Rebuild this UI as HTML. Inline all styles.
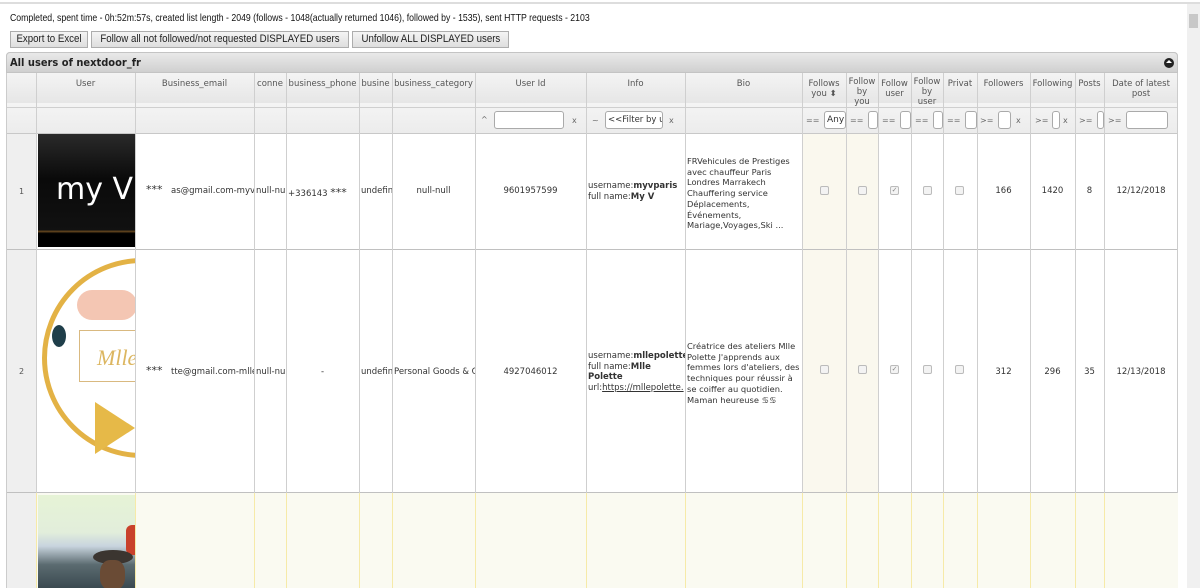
<!DOCTYPE html>
<html><head><meta charset="utf-8"><style>
*{box-sizing:border-box;margin:0;padding:0}
body{width:1200px;height:588px;overflow:hidden;background:#fff;font-family:"Liberation Sans",sans-serif;position:relative;color:#222}
.a{position:absolute}
.btn{position:absolute;top:31px;height:17px;border:1px solid #adadad;background:linear-gradient(#f4f4f4,#dedede);font-size:11px;line-height:15px;color:#222;white-space:nowrap;overflow:hidden;text-align:center}
.btn span{display:inline-block;transform:scaleX(.88);margin:0 -20px}
.v{position:absolute;width:1px;background:#cfcfcf}
.h{position:absolute;height:1px;background:#cfcfcf}
.hd{position:absolute;font-size:8.5px;font-family:"DejaVu Sans",sans-serif;color:#555;text-align:center;line-height:10px}
.cell{position:absolute;font-size:8.5px;font-family:"DejaVu Sans",sans-serif;color:#333;white-space:nowrap;overflow:hidden}
.cb{position:absolute;width:9px;height:9px;border:1px solid #bbb;border-radius:2px;background:#f3f3f3}
.in{position:absolute;height:18px;border:1px solid #aaa;border-radius:3px;background:#fff;font-size:9px;font-family:"DejaVu Sans",sans-serif;padding-left:2px;line-height:16px;overflow:hidden;white-space:nowrap;color:#333}
.op{position:absolute;font-size:8px;color:#666;font-family:"DejaVu Sans",sans-serif}
</style></head><body>
<div class="a" style="left:0;top:2px;width:1200px;height:2px;background:#ddd"></div>
<div class="a" style="left:10px;top:12px;font-size:10.5px;color:#111;white-space:nowrap;transform:scaleX(.83);transform-origin:left">Completed, spent time - 0h:52m:57s, created list length - 2049 (follows - 1048(actually returned 1046), followed by - 1535), sent HTTP requests - 2103</div>
<div class="btn" style="left:10px;width:78px"><span>Export to Excel</span></div>
<div class="btn" style="left:91px;width:258px"><span>Follow all not followed/not requested DISPLAYED users</span></div>
<div class="btn" style="left:352px;width:157px"><span>Unfollow ALL DISPLAYED users</span></div>
<div class="a" style="left:1187px;top:4px;width:13px;height:584px;background:#f0f0f0"></div>
<div class="a" style="left:1189px;top:14px;width:9px;height:14px;background:#c8c8c8"></div>
<div class="a" style="left:6px;top:52px;width:1172px;height:536px;border:1px solid #ccc;border-bottom:none;border-radius:4px 4px 0 0;background:#fff"></div>
<div class="a" style="left:6px;top:52px;width:1172px;height:21px;border-radius:4px 4px 0 0;background:linear-gradient(#e9e9e9,#d0d0d0);border:1px solid #c4c4c4"></div>
<div class="a" style="left:10px;top:56px;font-size:11px;font-weight:bold;font-family:'DejaVu Sans',sans-serif;color:#222;transform:scaleX(.9);transform-origin:left">All users of nextdoor_fr</div>
<div class="a" style="left:1164px;top:58px;width:10px;height:10px;border-radius:50%;background:#222"></div>
<div class="a" style="left:1166px;top:60px;width:0;height:0;border-left:3px solid transparent;border-right:3px solid transparent;border-bottom:3px solid #fff"></div>
<div class="a" style="left:7px;top:73px;width:1170px;height:60px;background:linear-gradient(#f4f4f4,#e6e6e6 50%,#f4f4f4 50%,#ececec)"></div>
<div class="h" style="left:7px;top:107px;width:1170px"></div>
<div class="h" style="left:7px;top:133px;width:1170px;background:#c8c8c8"></div>
<div class="a" style="left:7px;top:134px;width:29px;height:454px;background:#efefef"></div>
<div class="a" style="left:802px;top:134px;width:76px;height:358px;background:#faf8ee"></div>
<div class="a" style="left:36px;top:493px;width:1142px;height:95px;background:#fafaf1"></div>
<div class="h" style="left:7px;top:249px;width:1170px;background:#c0c0c0"></div>
<div class="h" style="left:7px;top:492px;width:1170px;background:#c0c0c0"></div>
<div class="v" style="left:36px;top:73px;height:420px"></div>
<div class="v" style="left:135px;top:73px;height:420px"></div>
<div class="v" style="left:254px;top:73px;height:420px"></div>
<div class="v" style="left:286px;top:73px;height:420px"></div>
<div class="v" style="left:359px;top:73px;height:420px"></div>
<div class="v" style="left:392px;top:73px;height:420px"></div>
<div class="v" style="left:475px;top:73px;height:420px"></div>
<div class="v" style="left:586px;top:73px;height:420px"></div>
<div class="v" style="left:685px;top:73px;height:420px"></div>
<div class="v" style="left:802px;top:73px;height:420px"></div>
<div class="v" style="left:846px;top:73px;height:420px"></div>
<div class="v" style="left:878px;top:73px;height:420px"></div>
<div class="v" style="left:911px;top:73px;height:420px"></div>
<div class="v" style="left:943px;top:73px;height:420px"></div>
<div class="v" style="left:977px;top:73px;height:420px"></div>
<div class="v" style="left:1030px;top:73px;height:420px"></div>
<div class="v" style="left:1075px;top:73px;height:420px"></div>
<div class="v" style="left:1104px;top:73px;height:420px"></div>
<div class="v" style="left:36px;top:493px;height:95px;background:#f6eaa8"></div>
<div class="v" style="left:135px;top:493px;height:95px;background:#f6eaa8"></div>
<div class="v" style="left:254px;top:493px;height:95px;background:#f6eaa8"></div>
<div class="v" style="left:286px;top:493px;height:95px;background:#f6eaa8"></div>
<div class="v" style="left:359px;top:493px;height:95px;background:#f6eaa8"></div>
<div class="v" style="left:392px;top:493px;height:95px;background:#f6eaa8"></div>
<div class="v" style="left:475px;top:493px;height:95px;background:#f6eaa8"></div>
<div class="v" style="left:586px;top:493px;height:95px;background:#f6eaa8"></div>
<div class="v" style="left:685px;top:493px;height:95px;background:#f6eaa8"></div>
<div class="v" style="left:802px;top:493px;height:95px;background:#f6eaa8"></div>
<div class="v" style="left:846px;top:493px;height:95px;background:#f6eaa8"></div>
<div class="v" style="left:878px;top:493px;height:95px;background:#f6eaa8"></div>
<div class="v" style="left:911px;top:493px;height:95px;background:#f6eaa8"></div>
<div class="v" style="left:943px;top:493px;height:95px;background:#f6eaa8"></div>
<div class="v" style="left:977px;top:493px;height:95px;background:#f6eaa8"></div>
<div class="v" style="left:1030px;top:493px;height:95px;background:#f6eaa8"></div>
<div class="v" style="left:1075px;top:493px;height:95px;background:#f6eaa8"></div>
<div class="v" style="left:1104px;top:493px;height:95px;background:#f6eaa8"></div>
<div class="hd" style="left:36px;top:79px;width:99px">User</div>
<div class="hd" style="left:135px;top:79px;width:119px">Business_email</div>
<div class="hd" style="left:254px;top:79px;width:32px">conne</div>
<div class="hd" style="left:286px;top:79px;width:73px">business_phone</div>
<div class="hd" style="left:359px;top:79px;width:33px;overflow:hidden">busine</div>
<div class="hd" style="left:392px;top:79px;width:83px">business_category</div>
<div class="hd" style="left:475px;top:79px;width:111px">User Id</div>
<div class="hd" style="left:586px;top:79px;width:99px">Info</div>
<div class="hd" style="left:685px;top:79px;width:117px">Bio</div>
<div class="hd" style="left:802px;top:79px;width:44px">Follows<br>you ⬍</div>
<div class="hd" style="left:846px;top:77px;width:32px">Follow<br>by<br>you</div>
<div class="hd" style="left:878px;top:79px;width:33px">Follow<br>user</div>
<div class="hd" style="left:911px;top:77px;width:32px">Follow<br>by<br>user</div>
<div class="hd" style="left:943px;top:79px;width:34px;overflow:hidden">Privat</div>
<div class="hd" style="left:977px;top:79px;width:53px">Followers</div>
<div class="hd" style="left:1030px;top:79px;width:45px">Following</div>
<div class="hd" style="left:1075px;top:79px;width:29px">Posts</div>
<div class="hd" style="left:1104px;top:79px;width:74px">Date of latest<br>post</div>
<div class="op" style="left:481px;top:115px">^</div>
<div class="in" style="left:494px;top:111px;width:70px"></div>
<div class="op" style="left:572px;top:116px">x</div>
<div class="op" style="left:592px;top:116px">~</div>
<div class="in" style="left:605px;top:111px;width:58px;font-size:8.5px">&lt;&lt;Filter by u</div>
<div class="op" style="left:669px;top:116px">x</div>
<div class="op" style="left:806px;top:116px">==</div>
<div class="in" style="left:824px;top:111px;width:22px">Any</div>
<div class="op" style="left:850px;top:116px">==</div>
<div class="in" style="left:868px;top:111px;width:10px"></div>
<div class="op" style="left:882px;top:116px">==</div>
<div class="in" style="left:900px;top:111px;width:11px"></div>
<div class="op" style="left:915px;top:116px">==</div>
<div class="in" style="left:933px;top:111px;width:10px"></div>
<div class="op" style="left:947px;top:116px">==</div>
<div class="in" style="left:965px;top:111px;width:12px"></div>
<div class="op" style="left:980px;top:116px">&gt;=</div>
<div class="in" style="left:998px;top:111px;width:13px"></div>
<div class="op" style="left:1016px;top:116px">x</div>
<div class="op" style="left:1035px;top:116px">&gt;=</div>
<div class="in" style="left:1052px;top:111px;width:8px"></div>
<div class="op" style="left:1063px;top:116px">x</div>
<div class="op" style="left:1079px;top:116px">&gt;=</div>
<div class="in" style="left:1097px;top:111px;width:7px"></div>
<div class="op" style="left:1108px;top:116px">&gt;=</div>
<div class="in" style="left:1126px;top:111px;width:42px"></div>
<div class="cell" style="left:7px;top:187px;width:29px;text-align:center;color:#555;font-size:8px">1</div>
<div class="a" style="left:38px;top:134px;width:97px;height:113px;background:linear-gradient(#2a2a2a,#0a0a0a 40%,#111 85%,#6a4a20 86%,#000 88%)"></div>
<div class="a" style="left:56px;top:172px;font-size:30px;color:#fff;font-family:'DejaVu Sans',sans-serif;white-space:nowrap;width:79px;overflow:hidden">my V</div>
<div class="cell" style="left:146px;top:183px;font-size:11px">***</div>
<div class="cell" style="left:171px;top:186px;width:83px">as@gmail.com-myvt</div>
<div class="cell" style="left:256px;top:186px;width:30px">null-nu</div>
<div class="cell" style="left:288px;top:186px;width:71px">+336143 <span style="font-size:11px">***</span></div>
<div class="cell" style="left:361px;top:186px;width:31px">undefin</div>
<div class="cell" style="left:392px;top:186px;width:83px;text-align:center">null-null</div>
<div class="cell" style="left:475px;top:186px;width:111px;text-align:center">9601957599</div>
<div class="cell" style="left:588px;top:181px;line-height:11px">username:<b>myvparis</b><br>full name:<b>My V</b></div>
<div class="cell" style="left:687px;top:156px;line-height:10.7px;font-size:8.3px">FRVehicules de Prestiges<br>avec chauffeur Paris<br>Londres Marrakech<br>Chauffering service<br>Déplacements,<br>Événements,<br>Mariage,Voyages,Ski ...</div>
<div class="cb" style="left:820px;top:186px"></div>
<div class="cb" style="left:858px;top:186px"></div>
<div class="cb" style="left:890px;top:186px;font-size:7px;line-height:7px;color:#888;text-align:center">✓</div>
<div class="cb" style="left:923px;top:186px"></div>
<div class="cb" style="left:955px;top:186px"></div>
<div class="cell" style="left:977px;top:186px;width:53px;text-align:center">166</div>
<div class="cell" style="left:1030px;top:186px;width:45px;text-align:center">1420</div>
<div class="cell" style="left:1075px;top:186px;width:29px;text-align:center">8</div>
<div class="cell" style="left:1104px;top:186px;width:74px;text-align:center">12/12/2018</div>
<div class="cell" style="left:7px;top:367px;width:29px;text-align:center;color:#555;font-size:8px">2</div>
<div class="a" style="left:37px;top:250px;width:98px;height:242px;overflow:hidden;background:#fff">
<div class="a" style="left:5px;top:8px;width:200px;height:200px;border:5px solid #e3b245;border-radius:50%"></div>
<div class="a" style="left:40px;top:40px;width:60px;height:30px;background:#f1b8a0;border-radius:15px;opacity:.8"></div>
<div class="a" style="left:42px;top:80px;width:60px;height:52px;border:1px solid #d9b980;background:#fff"></div>
<div class="a" style="left:60px;top:95px;font-size:22px;font-style:italic;color:#dcb660;font-family:'Liberation Serif',serif">Mlle</div>
<div class="a" style="left:15px;top:75px;width:14px;height:22px;background:#1f3e4a;border-radius:50%"></div>
<div class="a" style="left:58px;top:152px;width:0;height:0;border-top:26px solid transparent;border-bottom:26px solid transparent;border-left:40px solid #e6b948"></div>
</div>
<div class="cell" style="left:146px;top:364px;font-size:11px">***</div>
<div class="cell" style="left:171px;top:367px;width:83px">tte@gmail.com-mlle</div>
<div class="cell" style="left:256px;top:367px;width:30px">null-nu</div>
<div class="cell" style="left:286px;top:367px;width:73px;text-align:center">-</div>
<div class="cell" style="left:361px;top:367px;width:31px">undefin</div>
<div class="cell" style="left:394px;top:367px;width:81px">Personal Goods &amp; G</div>
<div class="cell" style="left:475px;top:367px;width:111px;text-align:center">4927046012</div>
<div class="cell" style="left:588px;top:351px;line-height:10.5px;width:97px">username:<b>mllepolette</b><br>full name:<b>Mlle<br>Polette</b><br>url:<u>https://mllepolette.</u></div>
<div class="cell" style="left:687px;top:341px;line-height:10.7px;font-size:8.3px">Créatrice des ateliers Mlle<br>Polette J'apprends aux<br>femmes lors d'ateliers, des<br>techniques pour réussir à<br>se coiffer au quotidien.<br>Maman heureuse ♋♋</div>
<div class="cb" style="left:820px;top:365px"></div>
<div class="cb" style="left:858px;top:365px"></div>
<div class="cb" style="left:890px;top:365px;font-size:7px;line-height:7px;color:#888;text-align:center">✓</div>
<div class="cb" style="left:923px;top:365px"></div>
<div class="cb" style="left:955px;top:365px"></div>
<div class="cell" style="left:977px;top:367px;width:53px;text-align:center">312</div>
<div class="cell" style="left:1030px;top:367px;width:45px;text-align:center">296</div>
<div class="cell" style="left:1075px;top:367px;width:29px;text-align:center">35</div>
<div class="cell" style="left:1104px;top:367px;width:74px;text-align:center">12/13/2018</div>
<div class="a" style="left:38px;top:495px;width:97px;height:93px;overflow:hidden;background:linear-gradient(#e6f3d6,#e2eedb 40%,#c8d4de 55%,#5b6b70 75%,#3a4950)">
<div class="a" style="left:88px;top:30px;width:20px;height:30px;background:#c9412b;border-radius:6px"></div>
<div class="a" style="left:55px;top:55px;width:40px;height:14px;background:#3b3530;border-radius:50%"></div>
<div class="a" style="left:62px;top:65px;width:25px;height:30px;background:#6a4b35;border-radius:40%"></div>
</div>
</body></html>
